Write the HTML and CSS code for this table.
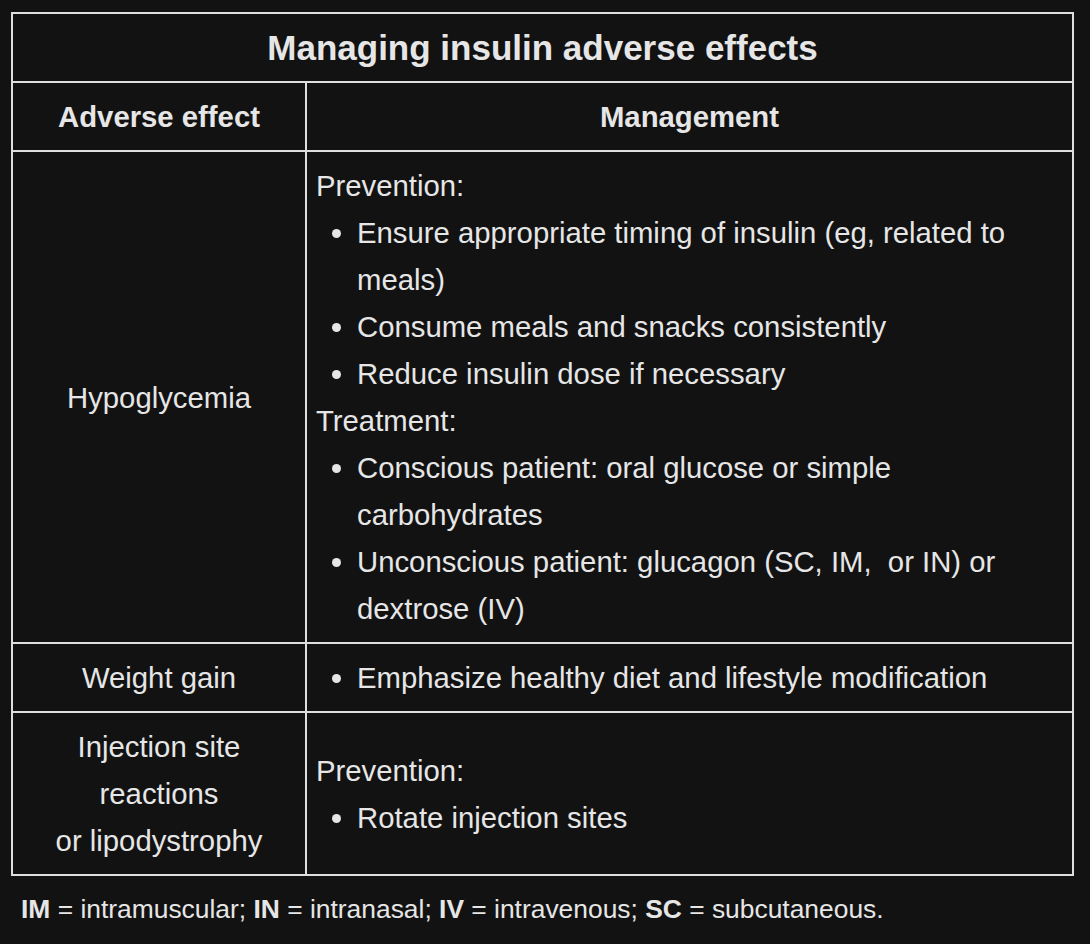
FILE: index.html
```html
<!DOCTYPE html>
<html lang="en">
<head>
<meta charset="utf-8">
<title>Managing insulin adverse effects</title>
<link rel="stylesheet" href="styles.css">
</head>
<body>
<div class="page">
  <table class="tbl">
    <colgroup><col class="c1"><col class="c2"></colgroup>
    <thead>
      <tr><th colspan="2" class="title">Managing insulin adverse effects</th></tr>
      <tr><th class="head">Adverse effect</th><th class="head">Management</th></tr>
    </thead>
    <tbody>
      <tr>
        <td class="effect">Hypoglycemia</td>
        <td class="mgmt">
          <div class="label">Prevention:</div>
          <ul class="list">
            <li>Ensure appropriate timing of insulin (eg, related to meals)</li>
            <li>Consume meals and snacks consistently</li>
            <li>Reduce insulin dose if necessary</li>
          </ul>
          <div class="label">Treatment:</div>
          <ul class="list">
            <li>Conscious patient: oral glucose or simple carbohydrates</li>
            <li>Unconscious patient: glucagon (SC, IM,&nbsp; or IN) or dextrose (IV)</li>
          </ul>
        </td>
      </tr>
      <tr>
        <td class="effect">Weight gain</td>
        <td class="mgmt">
          <ul class="list">
            <li>Emphasize healthy diet and lifestyle modification</li>
          </ul>
        </td>
      </tr>
      <tr>
        <td class="effect">Injection site reactions<br>or lipodystrophy</td>
        <td class="mgmt">
          <div class="label">Prevention:</div>
          <ul class="list">
            <li>Rotate injection sites</li>
          </ul>
        </td>
      </tr>
    </tbody>
  </table>
  <p class="foot"><b>IM</b> = intramuscular; <b>IN</b> = intranasal; <b>IV</b> = intravenous; <b>SC</b> = subcutaneous.</p>
</div>
</body>
</html>
```

FILE: styles.css
```css
html, body {
  margin: 0;
  background: #121212;
}

body {
  font-family: "Liberation Sans", Arial, sans-serif;
  color: #e6e6e6;
}

.page {
  padding: 12px 0 0 11px;
}

.tbl {
  border-collapse: separate;
  border-spacing: 0;
  table-layout: fixed;
  width: 1063px;
  border-top: 2px solid #dedede;
  border-left: 2px solid #dedede;
  font-size: 29.3px;
  line-height: 47px;
}

.c1 {
  width: 294px;
}

.tbl th,
.tbl td {
  border-right: 2px solid #dedede;
  border-bottom: 2px solid #dedede;
  padding: 10px 9px;
}

.title {
  font-size: 35px;
  font-weight: bold;
  padding: 9px 9px 8px;
  text-align: center;
}

.head {
  font-weight: bold;
  text-align: center;
}

.effect {
  text-align: center;
  vertical-align: middle;
}

.mgmt {
  text-align: left;
  vertical-align: middle;
}

.list {
  margin: 0;
  padding-left: 41px;
  list-style: disc;
}

.foot {
  margin: 18px 0 0 10px;
  font-size: 26.4px;
  line-height: 30px;
}
```
